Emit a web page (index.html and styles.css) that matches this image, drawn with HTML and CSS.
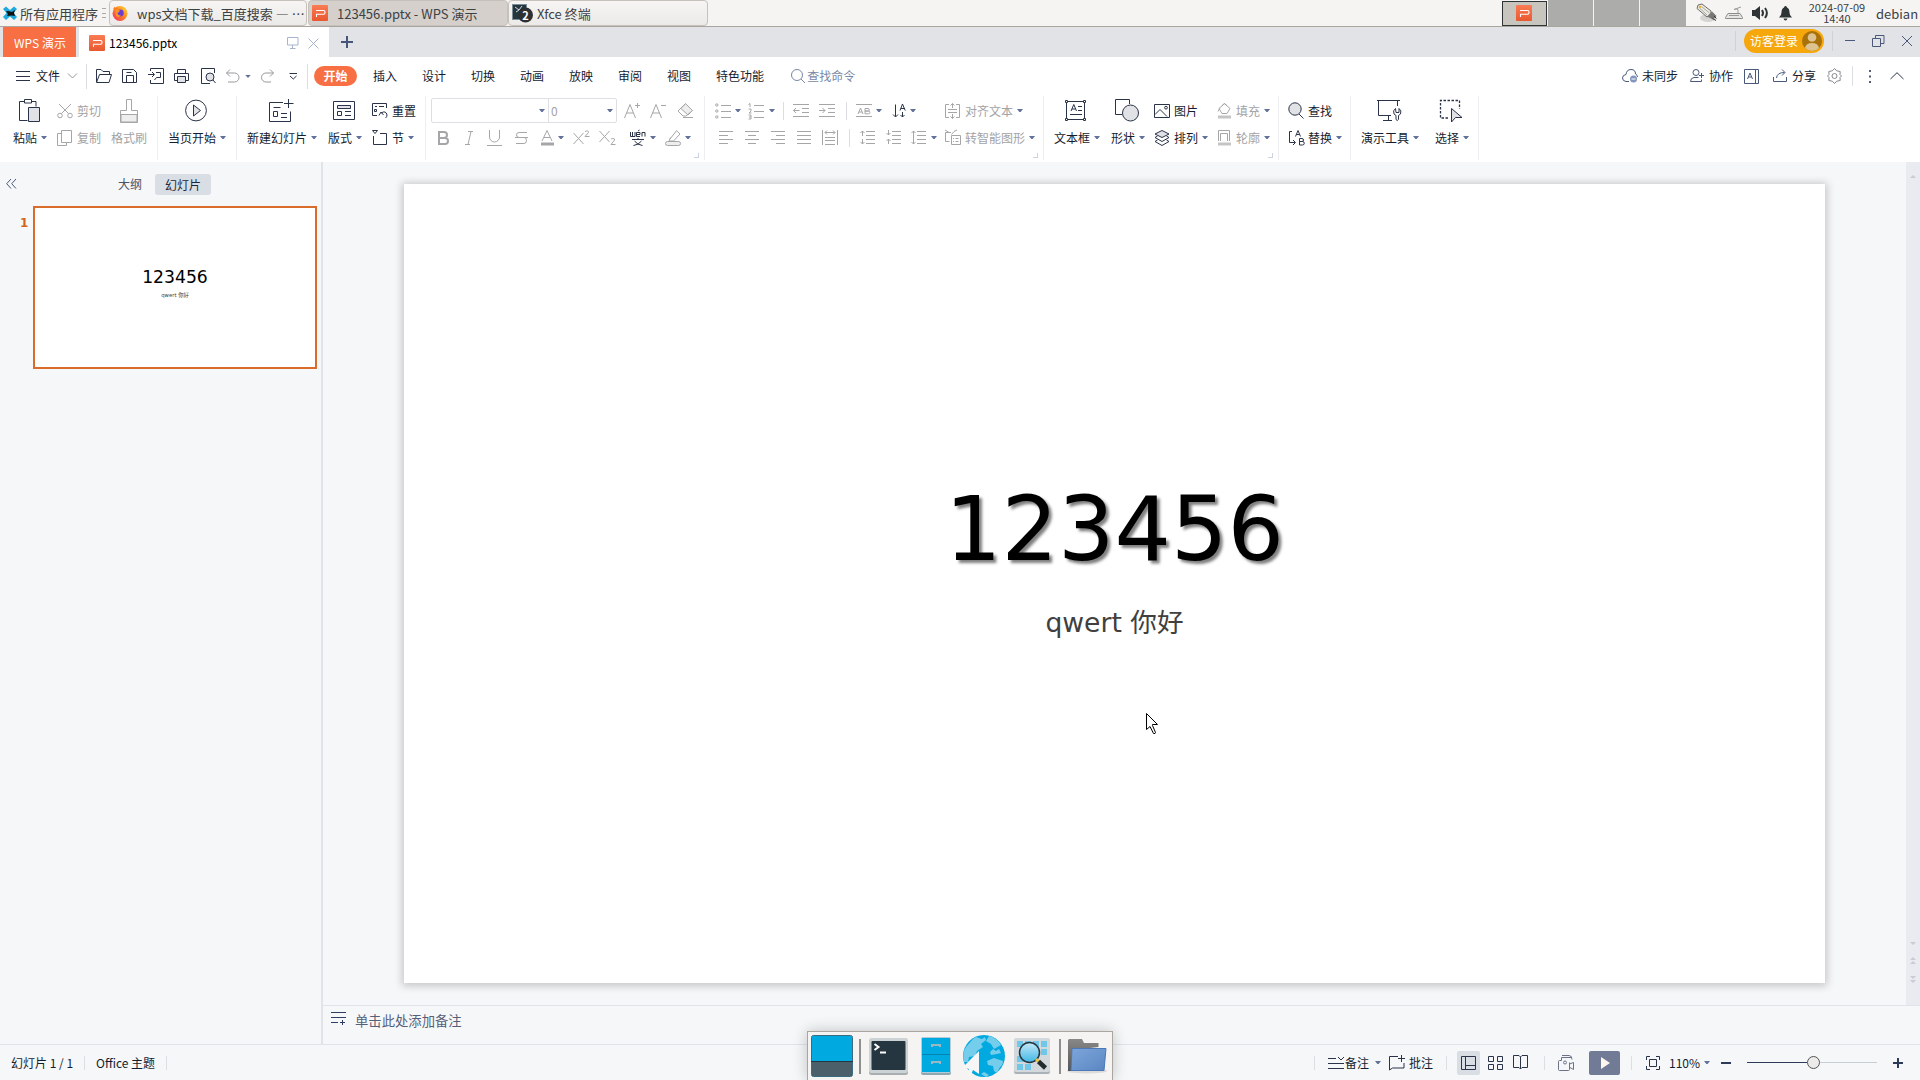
FILE: index.html
```
<!DOCTYPE html>
<html lang="zh-CN">
<head>
<meta charset="utf-8">
<title>123456.pptx - WPS 演示</title>
<link rel="stylesheet" href="styles.css">
</head>
<body>
<svg class="defs" width="0" height="0">
  <defs>
    <linearGradient id="orange" x1="0" y1="0" x2="0" y2="1"><stop offset="0" stop-color="#f97c55"/><stop offset="1" stop-color="#e9582f"/></linearGradient>
    <linearGradient id="fox" x1="1" y1="0" x2="0" y2="1"><stop offset="0" stop-color="#ffe141"/><stop offset=".45" stop-color="#ff8a1c"/><stop offset="1" stop-color="#f0246e"/></linearGradient>
    <linearGradient id="folder" x1="0" y1="0" x2="1" y2="1"><stop offset="0" stop-color="#7da6da"/><stop offset="1" stop-color="#5a86c2"/></linearGradient>
    <linearGradient id="folderback" x1="0" y1="0" x2="0" y2="1"><stop offset="0" stop-color="#888"/><stop offset="1" stop-color="#555"/></linearGradient>
    <linearGradient id="lens" x1="0" y1="0" x2="0" y2="1"><stop offset="0" stop-color="#c4e9f7"/><stop offset="1" stop-color="#3fb6e6"/></linearGradient>
    <symbol id="ppt" viewBox="0 0 16 16"><rect width="16" height="16" rx="1" fill="url(#orange)"/><path d="M4 5.500H11.500Q13 5.500 13 7V7.700Q13 9.200 11.500 9.200H4.500V12" fill="none" stroke="#fff" stroke-width="1.100"/></symbol>
  </defs>
</svg>

<header class="panel">
  <div class="start">
    <svg width="14" height="14" viewBox="0 0 14 14"><path d="M0 3L3 .5 7 4 11 .5 14 3 10.500 7 14 11 11 14 7 10.500 3 14 0 11 3.500 7Z" fill="#1fa9dc"/><path d="M3 5.500 5 5 9 6 12 4 11 7 12 10 9 9.500 4 10 5 8Z" fill="#111"/></svg>
    <span>所有应用程序</span>
    <i class="grip"></i>
  </div>
  <div class="task t1"><svg width="16" height="16" viewBox="0 0 16 16"><circle cx="8" cy="8.400" r="7.500" fill="url(#fox)"/><path d="M1 4 3 1.500 4 4 6 2.500 6 5Z" fill="#ff7a1c"/><circle cx="8.300" cy="8" r="3.400" fill="#6a3fd0"/><path d="M3 5Q7 3.500 8 6L5.500 8Q6 11 9 10.500 7 13 4 11Z" fill="#ff9222"/></svg><span>wps文档下载_百度搜索 — …</span></div>
  <div class="task t2 on"><svg width="16" height="16"><use href="#ppt"/></svg><span>123456.pptx - WPS 演示</span></div>
  <div class="task t3"><svg width="22" height="20" viewBox="0 0 22 20"><rect x=".5" y="1.500" width="14" height="15" fill="#263640" stroke="#7d8b93"/><path d="M3 4l4 3M10 3l-3 4-3 2" stroke="#cfd8dc" fill="none"/><circle cx="13.500" cy="12" r="7.500" fill="#2d3032"/><text x="13.500" y="16.500" text-anchor="middle" class="badge">2</text></svg><span>Xfce 终端</span></div>
  <div class="pager">
    <div class="ws on"><svg width="16" height="16"><use href="#ppt"/></svg></div><div class="ws"></div><div class="ws"></div><div class="ws"></div>
  </div>
  <div class="tray">
    <svg width="21" height="20" viewBox="0 0 21 20"><ellipse cx="12" cy="15" rx="8" ry="4" fill="#d5d4d2"/><path d="M1 5.500 2 2 6 1 15 8 15 12 11 14Z" fill="#eceae0" stroke="#6d6d6a"/><path d="M5.500 3.500l8 6.500M3.500 5l7.500 7" stroke="#aaa"/><path d="M11 13.500l5-5 4.500 4.500-3.500 3.500Z" fill="#777"/><path d="M16.500 15.500l3.500 2M18 13l2.500 2.500" stroke="#333"/><circle cx="4" cy="4" r="1.300" fill="#e8b53a"/></svg>
    <svg width="18" height="14" viewBox="0 0 18 14"><path d="M3 7.500H15L17.500 11.500V12.500H.5V11.500Z" fill="#e6e6e4" stroke="#8c8c8a"/><path d="M4 9.500h10M13 7V4Q13 2.500 11 3L9 3.500 16 1" stroke="#999" fill="none"/></svg>
    <svg width="17" height="16" viewBox="0 0 17 16"><path d="M0 5H3L8 1V15L3 11H0Z" fill="#2e3436"/><path d="M10 5q2 3 0 6M13 3q3.800 5 0 10" stroke="#2e3436" stroke-width="2" fill="none"/></svg>
    <svg width="13" height="15" viewBox="0 0 13 15"><path d="M6.500 0Q8 0 8 1.500 10.500 2.500 10.500 6.500 10.500 9.500 13 11.500H0Q2.500 9.500 2.500 6.500 2.500 2.500 5 1.500 5 0 6.500 0ZM4.500 12.500H8.500Q8 14.500 6.500 14.500T4.500 12.500Z" fill="#2e3436"/></svg>
    <div class="clock"><div>2024-07-09</div><div>14:40</div></div>
    <span class="user">debian</span>
  </div>
</header>

<div class="tabs">
  <div class="brand">WPS 演示</div>
  <div class="doc">
    <svg width="16" height="16"><use href="#ppt"/></svg><span>123456.pptx</span>
    <svg class="ln pale" width="12" height="12" viewBox="0 0 12 12"><path d="M.5.5h10.500v7.500H.5ZM5.500 8v3M3 11.500h5.500"/></svg>
    <svg class="ln pale" width="11" height="11" viewBox="0 0 11 11"><path d="M.5.5l10 10M10.500.5l-10 10"/></svg>
  </div>
  <svg class="plus" width="12" height="12" viewBox="0 0 12 12"><path d="M6 0v12M0 6h12" stroke="#46557a" stroke-width="2"/></svg>
  <div class="winctl">
    <i class="vbar"></i>
    <div class="login"><span>访客登录</span><svg width="20" height="20" viewBox="0 0 20 20"><circle cx="10" cy="10" r="10" fill="#a97109"/><circle cx="10" cy="6.500" r="4.300" fill="#dcc391"/><path d="M3 17Q4 12 10 12T17 17Q14 20 10 20T3 17Z" fill="#dcc391"/></svg></div>
    <i class="vbar"></i>
    <svg class="ln navy" width="68" height="12" viewBox="0 0 68 12"><path d="M0 5.500h10M27.500 3.500h8v8h-8zM30.500 3.500V.5h8.500v8h-3.500M57 1l10 10M67 1l-10 10"/></svg>
  </div>
</div>

<nav class="menu">
  <div class="file">
    <svg class="ln" width="14" height="11" viewBox="0 0 14 11"><path d="M0 .5h14M0 5.500h14M0 9.500h14"/></svg><span>文件</span>
    <svg class="ln mid" width="9" height="6" viewBox="0 0 9 6"><path d="M0 .5l4.500 4.500L9 .5"/></svg>
  </div>
  <div class="quick">
    <svg class="ln" width="16" height="16" viewBox="0 0 16 16"><path d="M.5 14V1.500h4.500l2 2h6.500v3M.5 14.500l3-8h12l-2.500 8z"/></svg>
    <svg class="ln" width="16" height="16" viewBox="0 0 16 16"><path d="M.5 14.500V1.500h11l3 3v10zM4.500 14V7.500h7V14M4.500 4.500h5"/></svg>
    <svg class="ln" width="17" height="16" viewBox="0 0 17 16"><path d="M2.500 3V.5h13v15h-13V12M0 6.500h6M4 4l2.500 2.500L4 9M8 4.500h4.500v5H8.500L6.500 12"/></svg>
    <svg class="ln" width="15" height="16" viewBox="0 0 15 16"><path d="M3.500 5V1.500h8V5M3 12.500H.5v-7h14v7H12"/><path class="soft" d="M3.500 8.500h8v6h-8z"/></svg>
    <svg class="ln" width="16" height="16" viewBox="0 0 16 16"><path d="M9 15.500H.5V.5h13V5"/><circle class="soft" cx="9" cy="9" r="4"/><path d="M12 12l2.500 3"/></svg>
    <svg class="ln mid" width="14" height="14" viewBox="0 0 14 14"><path d="M4 .5L.5 4 4 7.500M.5 4H8.500a4.500 4.500 0 0 1 0 9H2"/></svg>
    <i class="caret"></i>
    <svg class="ln mid" width="14" height="14" viewBox="0 0 14 14"><path d="M9 .5L12.500 4 9 7.500M12.500 4H5a4.500 4.500 0 0 0 0 9h5"/></svg>
    <svg class="ln" width="9" height="7" viewBox="0 0 9 7"><path d="M.5.5h7.500M1 3l3.300 3L7.500 3"/></svg>
  </div>
  <div class="cats"><b>开始</b><span>插入</span><span>设计</span><span>切换</span><span>动画</span><span>放映</span><span>审阅</span><span>视图</span><span>特色功能</span></div>
  <div class="find"><svg class="ln" width="15" height="15" viewBox="0 0 15 15"><circle cx="6" cy="6" r="5.500"/><path d="M10 10l4 4"/></svg><span>查找命令</span></div>
  <div class="share">
    <svg class="ln navy" width="17" height="14" viewBox="0 0 17 14"><path d="M7 12.500H4Q.5 12 .5 9 .5 6 4 5.500 4.500.5 9 .5T13.500 5Q15.500 6 15.500 8"/><circle cx="11.500" cy="10" r="3.500" fill="#8496bd" stroke="none"/><path d="M9.500 10h4" stroke="#fff"/></svg><span>未同步</span>
    <svg class="ln navy" width="15" height="14" viewBox="0 0 15 14"><circle cx="6" cy="3.500" r="3"/><path d="M8.500 8.500H4Q.5 9 .5 12.500H11.500V10.500M9 6.500h5M11.500 4v5"/></svg><span>协作</span>
    <svg class="ln navy" width="16" height="15" viewBox="0 0 16 15"><path d="M.5.5h14v14H.5zM11.500.5v14M3.500 10L6 4l2.500 6M4.500 8h3"/></svg>
    <svg class="ln navy" width="15" height="14" viewBox="0 0 15 14"><path d="M.5 8v4.500h13V8M3.500 9Q4 3.500 11.500 3.500M9 .5l3 3-3 3"/></svg><span>分享</span>
    <svg class="ln gear" width="15" height="16" viewBox="0 0 15 16"><path d="M5.300 2.800 7.500 .5 9.700 2.800 13.200 3.500 13 6.500 14.500 8 13 9.500 13.200 12.500 9.700 13.200 7.500 15.500 5.300 13.200 1.800 12.500 2 9.500 .5 8 2 6.500 1.800 3.500Z"/><circle cx="7.500" cy="8" r="2.500"/></svg>
    <i class="vbar"></i>
    <svg width="2" height="13" viewBox="0 0 2 13" fill="#555d70"><path d="M0 0h2v2H0zM0 5.500h2v2H0zM0 11h2v2H0z"/></svg>
    <svg class="ln" width="14" height="8" viewBox="0 0 14 8"><path d="M.5 7L7 .7 13.500 7"/></svg>
  </div>
</nav>

<section class="ribbon">
  <div class="group g1">
    <div class="big"><svg class="ln paste" width="22" height="24" viewBox="0 0 22 24"><path d="M5.500 2.500h-5v19h8M12.500 2.500h4.500v5M5.500.5h7v3.500h-7z"/><path class="soft" d="M9.500 8.500h11v14h-11z"/></svg><p>粘贴<i class="caret"></i></p></div>
    <div class="stack off">
      <div class="row"><svg class="ln gray" width="16" height="16" viewBox="0 0 16 16"><circle cx="3" cy="12.500" r="2.300"/><circle cx="13" cy="12.500" r="2.300"/><path d="M2 1l9.500 9.500M14 1L4.500 10.500"/></svg><span>剪切</span></div>
      <div class="row"><svg class="ln gray" width="16" height="16" viewBox="0 0 16 16"><path d="M4.500 3.500h-4v12h9v-3M4.500.5h10v12h-10z"/></svg><span>复制</span></div>
    </div>
    <div class="big off"><svg class="ln gray" width="18" height="24" viewBox="0 0 18 24"><path d="M6.500.5h5v11h6v12H.5v-12h6z"/><path class="soft" d="M1 15.500h16v7.500H1z"/></svg><p>格式刷</p></div>
  </div>
  <div class="group g2">
    <div class="big"><svg class="ln" width="22" height="23" viewBox="0 0 22 23"><circle cx="11" cy="11.500" r="10.400"/><path class="soft" d="M8.500 6v11l7-5.500z"/></svg><p>当页开始<i class="caret"></i></p></div>
  </div>
  <div class="group g3">
    <div class="big"><svg class="ln" width="25" height="24" viewBox="0 0 25 24"><path d="M14 3.500H.5v19h21v-10M19.500 0v9M15 4.500h9.500M4.500 8.500h7M4.500 12.500h4v5h-4zM12 14.500h6M12 18.500h6"/></svg><p>新建幻灯片<i class="caret"></i></p></div>
    <div class="big"><svg class="ln" width="22" height="20" viewBox="0 0 22 20"><path d="M.5.500h21v18H.5zM4.500 10.500h4v4h-4zM12 10.500h6M12 14.500h6"/><path class="soft" d="M4.500 4.500h13v3h-13z"/></svg><p>版式<i class="caret"></i></p></div>
    <div class="stack">
      <div class="row"><svg class="ln" width="16" height="16" viewBox="0 0 16 16"><path d="M5 12.500H.5V.500h14V5M3 3.500h2M7 3.500h5M2.500 6.500h2v2h-2zM7 12.500l2-3.500 2.500 3M9 10q5-3 6 2 0 2-1.500 3"/></svg><span>重置</span></div>
      <div class="row"><svg class="ln" width="16" height="16" viewBox="0 0 16 16"><path d="M.5.500h5l-2.500 3zM1.500 6v8.500h13v-11H8"/></svg><span>节</span><i class="caret"></i></div>
    </div>
  </div>
  <div class="group g4 off">
    <div class="fontrow">
      <div class="combo"><div class="face"><i class="caret"></i></div><div class="size"><span>0</span><i class="caret"></i></div></div>
      <svg class="ln gray" width="17" height="17" viewBox="0 0 17 17"><path d="M.5 16L6 2.500 11.500 16M2.500 11h7M13.500 1v5M11 3.500h5"/></svg>
      <svg class="ln gray" width="17" height="17" viewBox="0 0 17 17"><path d="M.5 16L6 2.500 11.500 16M2.500 11h7M11 3.500h5"/></svg>
      <svg class="ln gray" width="17" height="15" viewBox="0 0 17 15"><path class="soft" d="M8.500.7L15.500 7.500 11 12 3.800 5.500z"/><path d="M8.500.7L1 8l5 5h3L15.500 7.500M6 14.500h10"/></svg>
    </div>
    <div class="fmtrow">
      <svg class="ln gray" width="12" height="14" viewBox="0 0 12 14"><path stroke-width="2" d="M2 1h5a3 3 0 0 1 0 6H2zM2 7h6a3 3 0 0 1 0 6H2z"/></svg>
      <svg class="ln gray" width="9" height="14" viewBox="0 0 9 14"><path d="M3 .5h5M0 13.500h5M6 .5l-3 13"/></svg>
      <svg class="ln gray" width="15" height="16" viewBox="0 0 15 16"><path d="M2.500 0v7a5 5 0 0 0 10 0V0M0 15.500h15"/></svg>
      <svg class="ln gray" width="13" height="14" viewBox="0 0 13 14"><path d="M12 1.500H4Q1.500 1.500 1.500 4T4 6.500h5Q11.500 6.500 11.500 9.500T9 12.500H1M0 6.500h13"/></svg>
      <svg class="ln gray" width="15" height="16" viewBox="0 0 15 16"><path d="M2 11L7 .500 12 11M4 7.500h6"/><path d="M1 14h13" stroke-width="3"/></svg><i class="caret"></i>
      <svg class="ln gray" width="17" height="15" viewBox="0 0 17 15"><path d="M.5 3l10 11M10.500 3L.5 14M12 1.500q4-1.500 3.500 1L12 6.500h4.500"/></svg>
      <svg class="ln gray" width="17" height="15" viewBox="0 0 17 15"><path d="M.5 1l10 11M10.500 1L.5 12M12 9q4-1.500 3.500 1L12 14.500h4.500"/></svg>
      <svg class="ln" width="16" height="16" viewBox="0 0 16 16"><path d="M.5 2v4.500h4.500V2M2.500 2v4.500M6.500 4.500h3.500V2.500H6.500v4H10M12 6.500v-4h3v4M8 1L9.500 0M2 9.500h12M8 8v2M4.500 11q3 4 8 4.500M11.500 11q-3 4-8 4.500"/></svg><i class="caret"></i>
      <svg class="ln gray" width="17" height="16" viewBox="0 0 17 16"><path d="M5 9L11.500.700 15 4 8.500 11H4l1.500-3.500"/><rect class="soft" x=".5" y="11.500" width="15" height="4" rx="2"/></svg><i class="caret"></i>
    </div>
    <i class="corner"></i>
  </div>
  <div class="group g5 off">
    <div class="listrow">
      <svg class="ln gray" width="16" height="16" viewBox="0 0 16 16"><path d="M6 2.500h10M6 8.500h10M6 14.500h10"/><circle cx="1.800" cy="2" r="1.200"/><circle cx="1.800" cy="8" r="1.200"/><circle cx="1.800" cy="14" r="1.200"/></svg><i class="caret"></i>
      <svg class="ln gray" width="16" height="16" viewBox="0 0 16 16"><path d="M6 2.500h10M6 8.500h10M6 14.500h10M.5 1.500L2 .500V4M.5 6h2.500v2l-2 2H3.500M.5 12H3v4H.5M1 14h2"/></svg><i class="caret"></i>
      <i class="vbar"></i>
      <svg class="ln gray" width="16" height="14" viewBox="0 0 16 14"><path d="M0 .5h16M9 4.500h7M9 8.500h7M0 12.500h16M.5 6.500h6M3 4L.5 6.500 3 9"/></svg>
      <svg class="ln gray" width="16" height="14" viewBox="0 0 16 14"><path d="M0 .5h16M9 4.500h7M9 8.500h7M0 12.500h16M0 6.500h6M3.500 4L6 6.500 3.500 9"/></svg>
      <i class="vbar"></i>
      <svg class="ln gray" width="16" height="14" viewBox="0 0 16 14"><path d="M0 .5h16M0 12.500h16M2 10l2.500-6L7 10M3 8h3M9 4.500h3a1.300 1.300 0 0 1 0 2.600H9zM9 7h3.500a1.300 1.300 0 0 1 0 2.800H9z"/></svg><i class="caret"></i>
      <svg class="ln" width="14" height="16" viewBox="0 0 14 16"><path d="M2.500 1.500v12M0 11.500l2.500 2.500L5 11.500M7 7.500L9.500 1l2.700 6.500M8 5.500h4M9.500 9v5M7.500 12l2 2 2-2"/></svg><i class="caret"></i>
      <svg class="ln gray" width="16" height="16" viewBox="0 0 16 16"><path d="M4 1.500H.5v13H4M11 1.500h3.500v13H11M3 6.500h9M3 9.500h9M7.500 5V.5M5.500 2.500l2-2 2 2M7.500 11v4.500M5.500 13.500l2 2 2-2"/></svg><span>对齐文本</span><i class="caret"></i>
    </div>
    <div class="alignrow">
      <svg class="ln gray" width="15" height="14" viewBox="0 0 15 14"><path d="M0 .5h14M0 4.500h9M0 8.500h14M0 12.500h9"/></svg>
      <svg class="ln gray" width="15" height="14" viewBox="0 0 15 14"><path d="M0 .5h14M3 4.500h8M0 8.500h14M3 12.500h8"/></svg>
      <svg class="ln gray" width="15" height="14" viewBox="0 0 15 14"><path d="M0 .5h14M5 4.500h9M0 8.500h14M5 12.500h9"/></svg>
      <svg class="ln gray" width="15" height="14" viewBox="0 0 15 14"><path d="M0 .5h14M0 4.500h14M0 8.500h14M0 12.500h14"/></svg>
      <svg class="ln gray" width="17" height="16" viewBox="0 0 17 16"><path d="M.5 0v15M15.500 0v15M3 7.500h10M3 10.500h10M3 14.500h10M3 2.500h10M5 .5l-2 2 2 2M11 .5l2 2-2 2"/></svg>
      <i class="vbar"></i>
      <svg class="ln gray" width="16" height="16" viewBox="0 0 16 16"><path d="M6 1.500h9M6 5.500h9M6 9.500h9M6 13.500h9M2.500 1v5M.5 3l2-2 2 2M2.500 9v5M.5 12l2 2 2-2"/></svg>
      <svg class="ln gray" width="16" height="16" viewBox="0 0 16 16"><path d="M6 1.500h9M6 5.500h9M6 9.500h9M6 13.500h9M2.500 0v5M.5 3l2 2 2-2M2.500 9v5M.5 11l2-2 2 2"/></svg>
      <svg class="ln gray" width="16" height="16" viewBox="0 0 16 16"><path d="M6 1.500h9M6 5.500h9M6 9.500h9M6 13.500h9M2.500 1v13M.5 3l2-2 2 2M.5 12l2 2 2-2"/></svg><i class="caret"></i>
      <svg class="ln gray" width="17" height="16" viewBox="0 0 17 16"><path d="M4.500 11.500H.5v-9h5.500M0 0l4 2.500M6.500 4.500L9 1.500 12 0M6.500 5.500h9v9h-9zM8 8.500h1M10.500 8.500h3M8 11.500h1M10.500 11.500h3"/></svg><span>转智能图形</span><i class="caret"></i>
    </div>
    <i class="corner"></i>
  </div>
  <div class="group g6">
    <div class="big"><svg class="ln" width="22" height="21" viewBox="0 0 22 21"><path d="M1.500 1.500h18v18h-18zM6 11l2.800-6.500L11.500 11M7 9h3.500M13 6.500h4M13 10.500h4M5 14.500h12"/><path d="M.5.500h2v2h-2zM18.500.500h2v2h-2zM.5 18.500h2v2h-2zM18.500 18.500h2v2h-2z" fill="#fff"/></svg><p>文本框<i class="caret"></i></p></div>
    <div class="big"><svg class="ln" width="24" height="23" viewBox="0 0 24 23"><path d="M7 15.500H.5V.5h14V5"/><circle class="soft" cx="15.500" cy="14" r="8"/></svg><p>形状<i class="caret"></i></p></div>
    <div class="stack">
      <div class="row"><svg class="ln" width="16" height="14" viewBox="0 0 16 14"><path d="M.5.500h15v13H.5zM1 10.500L6 5.500l7 7"/><circle cx="12" cy="3.700" r="1.400"/></svg><span>图片</span></div>
      <div class="row"><svg class="ln" width="16" height="16" viewBox="0 0 16 16"><path class="soft" d="M8 .5l7 3.500-7 3.500L1 4z"/><path d="M3.500 6L1 7.500 8 11.500l7-4L12.500 6M3.500 10L1 11.500 8 15.500l7-4L12.500 10"/></svg><span>排列</span><i class="caret"></i></div>
    </div>
    <div class="stack off">
      <div class="row"><svg class="ln gray" width="15" height="16" viewBox="0 0 15 16"><path d="M7.500.5L13 5.500 10 10.500H5L2 5.500zM1 8.500L3 5M5 3l2-2.500 3 2"/><path d="M1 14h13" stroke-width="3" opacity=".65"/></svg><span>填充</span><i class="caret"></i></div>
      <div class="row"><svg class="ln gray" width="15" height="16" viewBox="0 0 15 16"><path d="M1.500 11V.5h11V11M3.500 11V3.500h7V11"/><path d="M1 14h13" stroke-width="3" opacity=".65"/></svg><span>轮廓</span><i class="caret"></i></div>
    </div>
    <i class="corner"></i>
  </div>
  <div class="group g7">
    <div class="stack">
      <div class="row"><svg class="ln" width="16" height="17" viewBox="0 0 16 17"><circle class="soft" cx="7" cy="7" r="6.200"/><path d="M11 12l4.500 4.500"/></svg><span>查找</span></div>
      <div class="row"><svg class="ln" width="16" height="16" viewBox="0 0 16 16"><path d="M4 1.500H1.500v11H7M5 10l2.500 2.500L5 15M7.500 6.500L10 .500l2.500 6M8.500 4.500h3M11.500 8.500H14a1.500 1.500 0 0 1 0 3H11.500zM11.500 11.500h3a1.700 1.700 0 0 1 0 3.500h-3z"/></svg><span>替换</span><i class="caret"></i></div>
    </div>
  </div>
  <div class="group g8">
    <div class="big"><svg class="ln" width="25" height="22" viewBox="0 0 25 22"><path d="M0 .5h23M1.500 1v14.500H14M20.500 1v5M11.500 15.500v5M6 20.500h9"/><path d="M18.500 8.500q-3 2-1.500 5.500l2 1.500v4q1.200 2 2.500 0v-4l2-1.500q1.500-3.500-1.500-5.500v4h-3z"/></svg><p>演示工具<i class="caret"></i></p></div>
    <div class="big"><svg class="ln" width="24" height="24" viewBox="0 0 24 24"><path stroke-dasharray="2.500 1.500" stroke-width="1.300" d="M9 19H1.500V1.500h19V10"/><path class="soft" d="M12.500 9.500v13.500l4-4.500h6.500z"/></svg><p>选择<i class="caret"></i></p></div>
  </div>
</section>

<main class="work">
  <aside class="side">
    <div class="sidetabs">
      <svg class="ln navy" width="11" height="10" viewBox="0 0 11 10"><path d="M5 0L.7 4.700 5 9.500M10 0L5.700 4.700 10 9.500"/></svg>
      <span>大纲</span><span class="on">幻灯片</span>
    </div>
    <div class="thumbrow"><b>1</b><div class="thumb"><div class="th">123456</div><div class="ts">qwert 你好</div></div></div>
  </aside>
  <div class="editor">
    <div class="canvas">
      <div class="slide"><h1>123456</h1><h2>qwert 你好</h2>
        <svg class="pointer" width="13" height="22" viewBox="0 0 13 22"><path d="M.5.500V16.500L4 13.500 7.500 20.500Q9.500 21 9.500 19.500L6.500 12.500V11.500H11.500Z" fill="#fff" stroke="#000"/></svg>
      </div>
      <div class="scroll">
        <svg width="6" height="3"><path d="M0 3L3 0 6 3z"/></svg>
        <svg width="6" height="3"><path d="M0 0L3 3 6 0z"/></svg>
        <svg width="6" height="7"><path d="M0 3L3 0 6 3zM0 7l3-3 3 3z"/></svg>
        <svg width="6" height="7"><path d="M0 0l3 3 3-3zM0 4l3 3 3-3z"/></svg>
      </div>
    </div>
    <div class="notes"><svg class="ln ink" width="16" height="14" viewBox="0 0 16 14"><path d="M0 .5h15M0 5.500h15M0 10.500h7M9 10.500h5M11.500 8v5"/></svg><span>单击此处添加备注</span></div>
  </div>
</main>

<footer class="status">
  <div class="info"><span>幻灯片 1 / 1</span><i class="vbar"></i><span>Office 主题</span><i class="vbar"></i></div>
  <div class="view">
    <i class="vbar"></i>
    <svg class="ln" width="17" height="14" viewBox="0 0 17 14"><path d="M0 2.500h8M0 7.500h16M0 12.500h16M10 1l3 3 3-3"/></svg><span>备注</span><i class="caret"></i>
    <svg class="ln" width="17" height="16" viewBox="0 0 17 16"><path d="M9 1.500H.5v13.500l3-2h11.500V8M12.500 0v7M9 3.500h7"/></svg><span>批注</span>
    <i class="vbar"></i>
    <div class="mode"><svg class="ln" width="15" height="14" viewBox="0 0 15 14"><path d="M.5.5h14v13H.5zM4.500.5v13M4.500 9.500h10"/></svg></div>
    <svg class="ln" width="15" height="14" viewBox="0 0 15 14"><path d="M.5.5h5v5h-5zM9.500.5h5v5h-5zM.5 8.500h5v5h-5zM9.500 8.500h5v5h-5z"/></svg>
    <svg class="ln" width="16" height="15" viewBox="0 0 16 15"><path d="M.5.5H6L7.500 2 9 .5h5.500v12H9L7.500 14 6 12.500H.5zM7.500 2v12"/></svg>
    <i class="vbar"></i>
    <svg class="ln fade" width="17" height="16" viewBox="0 0 17 16"><path d="M11.500 7.500v7q0 1-1 1h-9q-1 0-1-1v-8q0-1 1-1h2V2.500h10M4 .5h7q3 0 3 4M11.500 9l4-1.500v7L12 12.500"/><circle cx="7" cy="7.500" r="1.500"/></svg>
    <div class="play"><svg width="9" height="12" viewBox="0 0 9 12"><path d="M0 0l9 6-9 6z" fill="#fff6ef"/></svg></div>
    <i class="vbar"></i>
    <svg class="ln" width="15" height="14" viewBox="0 0 15 14"><path d="M.5 4V.5H4M10 .5h3.500V4M13.500 10v3.500H10M4 13.500H.5V10M3.500 3.500h7v7h-7z"/></svg><span>110%</span><i class="caret"></i>
    <i class="minus"></i>
    <div class="slider"><i class="fill"></i><i class="knob"></i><i class="rest"></i></div>
    <svg width="10" height="10" viewBox="0 0 10 10"><path d="M5 0v10M0 5h10" stroke="#2d3b58" stroke-width="2"/></svg>
  </div>
</footer>

<div class="dock">
  <svg width="42" height="42" viewBox="0 0 42 42"><rect x=".5" y=".5" width="41" height="41" rx="2" fill="#4b5f6b" stroke="#3a6b80"/><path d="M1 1h40v25H1z" fill="#00a9e0"/><path d="M0 26.500h42" stroke="#263640"/></svg>
  <i class="sep"></i>
  <svg width="39" height="37" viewBox="0 0 39 37"><rect y="2" width="39" height="35" rx="2.500" fill="#a9aeb1"/><rect width="39" height="35" rx="2.500" fill="#cdd2d5"/><rect x="2.500" y="3" width="34" height="29" rx="1" fill="#263640"/><path d="M5.500 6l4 3-4 3" stroke="#fff" stroke-width="2" fill="none"/><path d="M11 14.500h6" stroke="#fff" stroke-width="2"/></svg>
  <svg width="30" height="38" viewBox="0 0 30 38"><rect y="2" width="30" height="36" rx="2" fill="#8fa7b1"/><rect width="30" height="36" rx="2" fill="#b5cbd5"/><path d="M1 1h28v16H1zM1 18h28v17H1z" fill="#00a9e0"/><path d="M1 17.500h28" stroke="#0783b0"/><path d="M11 10V8h8v2M11 27v-2h8v2" fill="none" stroke="#9ab8c4" stroke-width="2"/></svg>
  <svg width="42" height="42" viewBox="0 0 42 42"><circle cx="21" cy="21" r="21" fill="#00a9e0"/><path d="M10 4L13 2 19 4 22 2 23 5 18 9 20 12 14 16 12 21 6 22 5 27 1 27Q-1 18 3 12ZM26 1Q34 3 38 10L31 14 28 9 23 6ZM24 26l7-3 9 3Q40 30 37 32L34 38 31 36 30 31 25 30ZM27 17l3-3 3 2 3-2 2 4-4 1-6 1ZM18 39l3-2 5 3-3 2Z" fill="#75cdec"/><path d="M16 16V39L10 35 7 42 3 40 6 34 0 32Z" fill="#f6f6f6"/></svg>
  <svg width="36" height="36" viewBox="0 0 36 36"><rect y="2" width="36" height="34" rx="2" fill="#a9b2b8"/><rect width="36" height="34" rx="2" fill="#d3d8dc"/><path d="M3 3h6v6H3zM11 3h6v6h-6zM19 3h6v6h-6zM27 3h6v6h-6zM27 11h6v6h-6zM3 18h6v6H3zM3 26h6v6H3zM11 26h6v6h-6z" fill="#70c8e8"/><circle cx="15.500" cy="14.500" r="10" fill="url(#lens)" stroke="#263640" stroke-width="1.500"/><path d="M22 21l3 3" stroke="#e8c53a" stroke-width="3"/><path d="M24.500 23.500l7 6.500" stroke="#222b30" stroke-width="4.500"/></svg>
  <i class="sep"></i>
  <svg width="40" height="36" viewBox="0 0 40 36"><ellipse cx="20" cy="33" rx="20" ry="2.500" fill="#dcdbd9"/><path d="M1 33V2.500Q1 1 2.500 1H15l2 4h14.500v4L6 12 5 33Z" fill="url(#folderback)"/><path d="M5 10.500h34l-2 22H4Z" fill="url(#folder)" stroke="#4a78b8"/></svg>
</div>
</body>
</html>
```
FILE: styles.css
```
* { box-sizing: border-box; }
body { margin: 0; width: 1920px; height: 1080px; overflow: hidden; display: flex; flex-direction: column; background: #f6f7f9; color: #151c2e; font: 12px/18px "Noto Sans CJK SC", sans-serif; }
svg { display: block; flex: none; overflow: visible; }
span, b, p { white-space: nowrap; }
p { margin: 0; }
.defs { position: absolute; }
.ln { fill: none; stroke: #2b3348; stroke-width: 1; }
.ln .soft { fill: #e0e2e6; }
.ln.gray { stroke: #a6a6a8; }
.ln.gray .soft { fill: #eee; }
.ln.mid { stroke: #98999d; }
.ln.gear { stroke: #85888f; }
.ln.pale { stroke: #a8b3cf; }
.ln.navy { stroke: #4a587a; }
.ln.ink { stroke: #2e3d63; }
.ln.fade { stroke: #6c7388; }
.off { color: #a3a3a5; }
.vbar { display: block; width: 1px; background: #dcdee3; flex: none; }
.caret { display: block; flex: none; width: 6px; height: 3px; margin-right: -1px; background: #62719a; clip-path: polygon(0 0, 100% 0, 60% 100%, 40% 100%); }

/* desktop panel */
.panel { height: 27px; flex: none; display: flex; background: #f5f4f2; border-bottom: 1px solid #aaa69f; font-size: 13px; line-height: 25px; color: #3c4144; }
.start { width: 109px; flex: none; display: flex; align-items: center; padding-left: 3px; gap: 3px; }
.grip { width: 4px; height: 10px; margin-left: 1px; border: solid #aaa; border-width: 1px 0; background: linear-gradient(#aaa, #aaa) 0 50% / 4px 1px no-repeat; }
.task { height: 26px; flex: none; display: flex; align-items: center; border: 1px solid #c6c2bb; border-radius: 4px; background: linear-gradient(#f6f5f4, #eceae8); }
.t1 { width: 198px; padding-left: 2px; gap: 9px; margin-right: 1px; }
.t2 { width: 200px; padding-left: 3px; gap: 9px; }
.task.on { background: #d5d0cb; }
.t3 { width: 200px; padding-left: 3px; gap: 3px; }
.badge { font: bold 11px "Noto Sans CJK SC", sans-serif; fill: #fff; }
.pager { display: flex; gap: 1px; margin-left: auto; }
.ws { width: 45px; height: 26px; background: #acacaa; }
.ws:last-child { width: 46px; }
.ws.on { border: 1px solid #2e3436; background: #c8c4be; padding: 3px 0 0 13px; margin-top: 1px; height: 25px; }
.tray { width: 234px; flex: none; display: grid; grid-template-columns: 29px 27px 27px 26px 71px 44px; align-items: center; padding-left: 10px; }
.clock { width: 64px; font-size: 11px; line-height: 11px; text-align: center; padding-bottom: 1px; }
.user { text-align: left; }

/* document tabs */
.tabs { height: 30px; flex: none; display: flex; align-items: center; background: #e2e3e7; padding-left: 3px; }
.brand { width: 73px; height: 30px; line-height: 31px; background: #f76f43; color: #fff; text-align: center; margin-right: 3px; padding-left: 1px; }
.doc { width: 250px; height: 30px; background: #fff; color: #000; display: grid; grid-template-columns: 20px 178px 21px 11px; align-items: center; padding: 2px 0 0 10px; }
.plus { margin: 0 0 0 12px; }
.winctl { margin-left: auto; width: 185px; display: flex; align-items: center; }
.winctl .vbar { height: 20px; background: #cfd1d6; margin-top: -3px; }
.login { width: 80px; height: 24px; margin: -3px 8px 0; border-radius: 12px; background: #f5a70c; color: #fff; display: flex; align-items: center; gap: 4px; padding-left: 6px; }
.winctl .ln { margin: -2px 0 0 12px; }

/* menu row */
.menu { height: 38px; flex: none; display: flex; align-items: center; background: #fff; }
.file { width: 87px; height: 25px; display: grid; grid-template-columns: 20px 32px 9px; align-items: center; padding-left: 16px; border-right: 1px solid #dcdee3; }
.quick { width: 221px; height: 25px; display: grid; grid-template-columns: 26px 26px 26px 27px 25px 19px 16px 28px 9px; align-items: center; padding-left: 9px; border-right: 1px solid #dcdee3; }
.cats { display: flex; gap: 25px; padding-left: 6px; align-items: center; }
.cats b { background: #f76f43; color: #fff; width: 43px; height: 20px; line-height: 20px; border-radius: 10px; text-align: center; margin-right: -9px; font-weight: 700; }
.find { display: flex; gap: 1px; margin-left: 27px; align-items: center; color: #7987a6; }
.find .ln { stroke: #7987a6; }
.share { margin-left: auto; width: 298px; display: grid; grid-template-columns: 20px 48px 19px 35px 29px 19px 35px 25px 17px 21px 14px; align-items: center; }
.share .vbar { height: 20px; }

/* ribbon */
.ribbon { height: 67px; flex: none; display: flex; background: #fff; padding-top: 1px; }
.group { height: 64px; flex: none; display: flex; border-right: 1px solid #eceef1; padding-top: 1px; position: relative; }
.big { flex: none; display: grid; grid-template-rows: 27px 27px; justify-items: center; align-items: center; }
.big p { display: flex; align-items: center; gap: 4px; }
.big svg { margin-right: 1px; }
.big .paste { margin: 0 0 0 1px; }
.row { height: 27px; display: flex; align-items: center; gap: 4px; }
.corner { position: absolute; right: 5px; top: 57px; width: 5px; height: 5px; border: solid #ccd3e2; border-width: 0 1px 1px 0; }
.g1 { width: 158px; padding-left: 13px; }
.g1 .big:last-child svg { margin: 0; }
.g1 .stack { margin: 0 10px 0 11px; }
.g2 { width: 79px; padding-left: 10px; }
.g3 { width: 189px; padding-left: 10px; }
.g3 .big { margin-right: 12px; }
.g3 .stack { margin-left: -1px; }
.g4 { width: 279px; padding-left: 5px; display: block; }
.fontrow { height: 27px; display: grid; grid-template-columns: 193px 26px 27px 17px; align-items: center; }
.combo { width: 186px; height: 25px; display: flex; border: 1px solid #dedfe2; border-radius: 2px; }
.face, .size { display: flex; align-items: center; justify-content: flex-end; }
.face { width: 117px; border-right: 1px solid #dedfe2; padding-right: 4px; }
.size { flex: 1; justify-content: space-between; padding: 0 4px 0 2px; }
.fmtrow { height: 27px; display: grid; grid-template-columns: 28px 22px 28px 25px 18px 15px 26px 31px 20px 15px 20px 6px; align-items: center; padding-left: 6px; }
.g5 { width: 339px; display: block; }
.listrow { height: 27px; display: grid; grid-template-columns: 20px 13px 21px 14px 10px 26px 27px 10px 20px 17px 17px 35px 20px 52px 6px; align-items: center; padding-left: 10px; }
.g5 .vbar { height: 18px; }
.alignrow { height: 27px; display: grid; grid-template-columns: 26px 26px 26px 25px 27px 11px 26px 25px 20px 14px 20px 64px 6px; align-items: center; padding-left: 14px; }
.g6 { width: 235px; padding-left: 10px; }
.g6 .big { margin-right: 12px; }
.g6 .big + .stack { margin-left: -2px; width: 63px; }
.g7 { width: 72px; padding-left: 9px; }
.g8 { width: 128px; padding-left: 10px; }
.g8 .big { margin-right: 17px; }

/* workspace */
.work { height: 883px; flex: none; display: flex; border-bottom: 1px solid #e1e3e9; }
.side { width: 323px; border-right: 2px solid #e1e3e9; }
.sidetabs { display: grid; grid-template-columns: 112px 36px 56px; align-items: center; padding: 11px 0 0 6px; color: #4a5268; height: 33px; }
.sidetabs .on { background: #d9dee5; color: #20273a; border-radius: 3px; height: 21px; line-height: 21px; text-align: center; margin: 0 -1px 0 1px; }
.thumbrow { display: flex; margin-top: 11px; padding-left: 20px; color: #d3651e; }
.thumbrow b { width: 13px; padding-top: 9px; font: bold 12px/16px "DejaVu Sans", sans-serif; }
.thumb { width: 284px; height: 163px; border: 2px solid #d96b2b; background: #fff; text-align: center; color: #000; padding-top: 58px; }
.th { font: 17.2px/22px "DejaVu Sans", sans-serif; }
.ts { font: 5.3px/10px "DejaVu Sans", "Noto Sans CJK SC", sans-serif; color: #404040; margin-top: 2px; }
.editor { flex: 1; display: flex; flex-direction: column; }
.canvas { height: 844px; flex: none; display: flex; padding: 22px 0 0 81px; border-bottom: 1px solid #e1e3e9; }
.slide { width: 1421px; height: 799px; background: #fff; box-shadow: 0 1px 8px 2px rgba(0,0,0,.2); position: relative; text-align: center; }
h1, h2 { margin: 0; font-weight: 400; }
h1 { font: 88.8px/104px "DejaVu Sans", sans-serif; color: #000; text-shadow: 3px 3px 3px rgba(0,0,0,.5); padding-top: 294px; }
h2 { font: 26.65px/36px "DejaVu Sans", "Noto Sans CJK SC", sans-serif; color: #404040; margin-top: 23px; }
.pointer { position: absolute; left: 742px; top: 529px; }
.scroll { width: 14px; height: 843px; margin: -22px 0 0 auto; background: #e9ebf1; fill: #c9ccd2; display: grid; grid-template-rows: 767px 15px 19px 7px; padding: 13px 0 0 4px; }
.notes { display: flex; gap: 8px; padding: 6px 0 0 8px; font-size: 13.33px; color: #565f78; line-height: 18px; }

/* status bar */
.status { height: 35px; flex: none; display: flex; justify-content: space-between; align-items: center; }
.status .vbar { height: 14px; }
.info { display: grid; grid-template-columns: 73px 12px 70px 1px; align-items: center; padding: 1px 0 0 11px; }
.view { width: 606px; display: grid; grid-template-columns: 14px 17px 30px 14px 20px 37px 11px 31px 25px 31px 14px 31px 42px 15px 23px 35px 17px 26px 146px 10px; align-items: center; }
.view span { padding-top: 1px; }
.mode { width: 23px; height: 24px; background: #d9dee5; border-radius: 2px; padding: 5px 4px; }
.play { width: 31px; height: 24px; background: #717b95; border-radius: 2px; padding: 6px 0 0 12px; }
.minus { width: 10px; height: 2px; background: #2d3b58; }
.slider { width: 130px; display: flex; align-items: center; }
.fill { width: 60px; height: 1px; background: #2d3b58; }
.knob { width: 13px; height: 13px; border: 1px solid #555; border-radius: 50%; background: #ecebea; }
.rest { flex: 1; height: 1px; background: #c9cdd6; }

/* launcher dock over the desktop */
.dock { position: absolute; left: 807px; top: 1031px; width: 306px; height: 49px; border: 1px solid #aaa69f; border-bottom: 0; background: #f5f4f2; box-shadow: 0 0 14px rgba(0,0,0,.22); display: grid; grid-template-columns: 48px 10px 52px 42px 51px 45px 8px 40px; align-items: center; padding-left: 3px; }
.sep { width: 2px; height: 35px; background: #8e8f8f; }
```
